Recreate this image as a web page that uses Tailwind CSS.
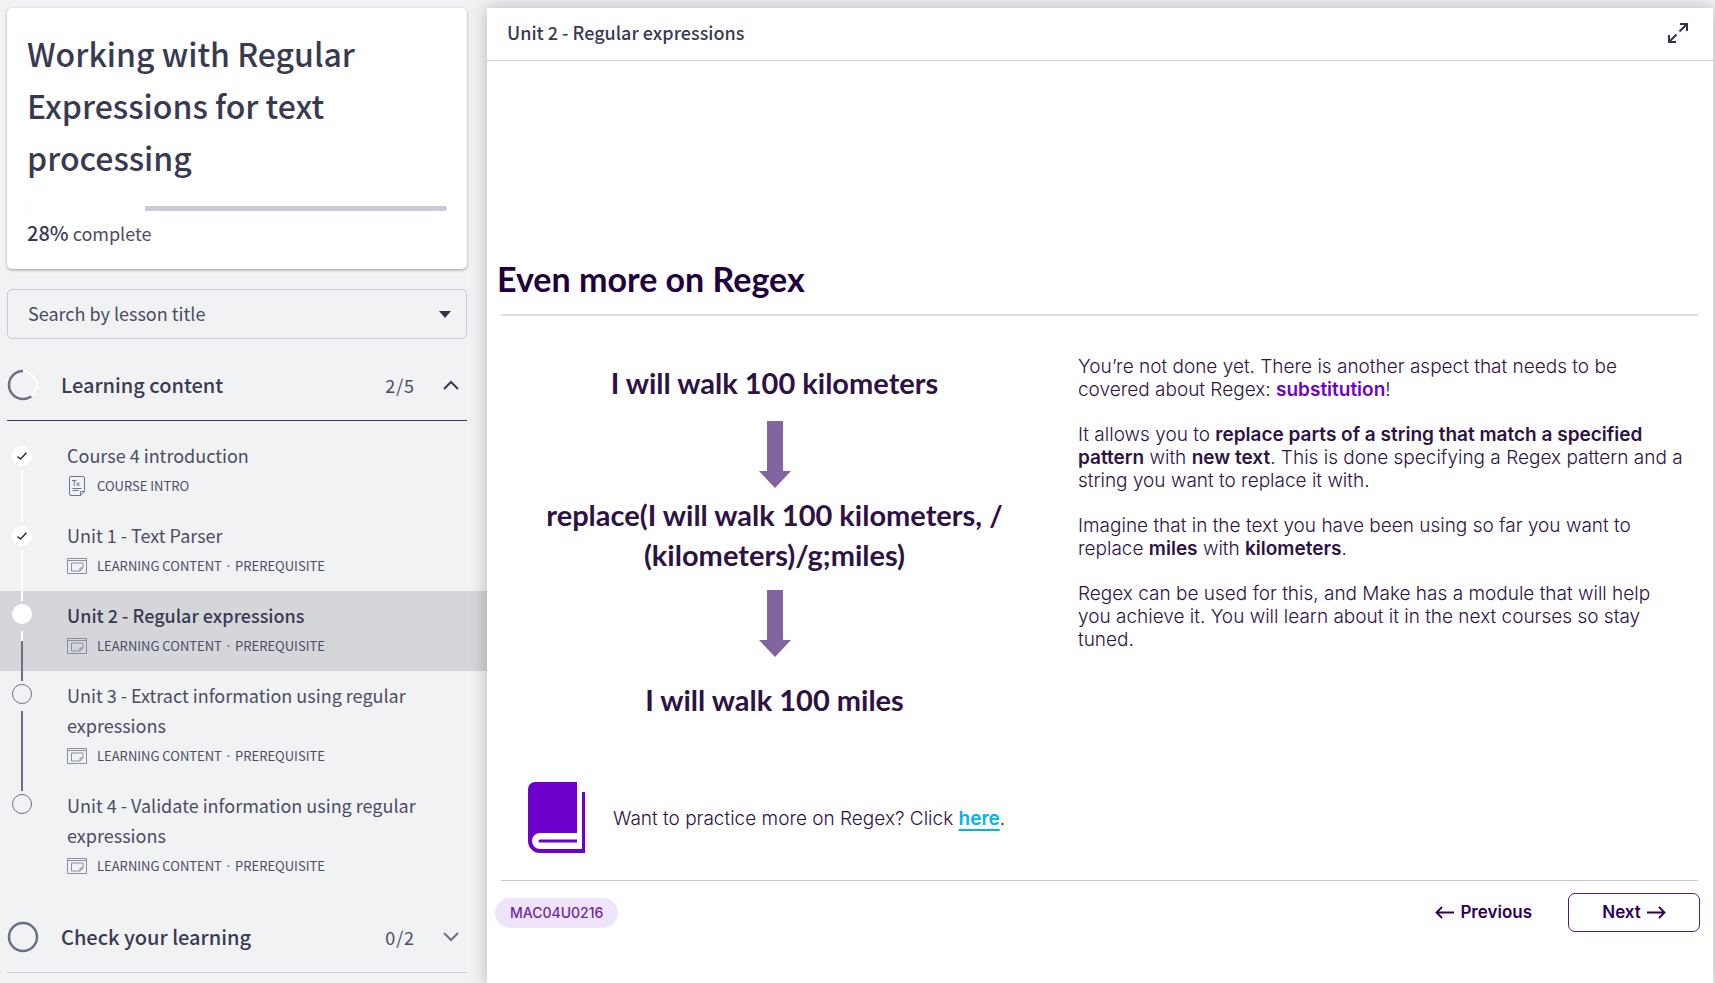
<!DOCTYPE html>
<html lang="en">
<head>
<meta charset="utf-8">
<title>Working with Regular Expressions for text processing</title>
<script src="https://cdn.jsdelivr.net/npm/@tailwindcss/browser@4"></script>
</head>
<body class="bg-[#f1f2f4] text-[#383a52] font-['Noto_Sans_CJK_JP','Noto_Sans_CJK_SC',sans-serif]">
<svg class="hidden">
  <symbol id="lesson" viewBox="0 0 20 16"><g fill="none" stroke="currentColor"><path d="M.5.5h19v15H.5zM.5 2.500h19M16 10V5H4.500v8H13zM13 13v-3h3"/></g></symbol>
  <symbol id="down-arrow" viewBox="0 0 32 67"><path fill="#82649f" d="M8 0h16v50h8L16 67 0 50h8z"/></symbol>
  <symbol id="check" viewBox="0 0 10 8"><path fill="none" stroke="#2b2b35" stroke-width="1.500" d="M.5 4.500 3.500 7 9.500.8"/></symbol>
</svg>
<div class="flex min-h-screen">
  <aside class="w-[487px] shrink-0 pt-2">
    <section class="ml-[7px] mr-5 h-[261px] rounded-[5px] bg-white px-5 pt-[19px] shadow-[0_1px_3px_rgba(0,0,0,0.35)]">
      <h1 class="text-[32px] leading-[52px] font-medium">Working with Regular Expressions for text processing</h1>
      <div class="mt-[23px] flex h-[5px] overflow-hidden rounded-[3px] bg-[#c9cbd8]" role="progressbar" aria-valuenow="28" aria-valuemin="0" aria-valuemax="100" aria-label="Course progress"><div class="bg-white" style="width:28%"></div></div>
      <p class="mt-[7px] text-[18px] leading-[30px]"><span class="text-[20px] font-medium">28%</span> <span class="text-[#4b4d63]">complete</span></p>
    </section>
    <div class="relative mt-5 mr-5 ml-[7px]">
      <select aria-label="Search by lesson title" class="h-[50px] w-full appearance-none rounded-[5px] border border-[#c9cbd8] bg-transparent px-5 pb-[2px] text-[18px] text-[#4b4d63]"><option>Search by lesson title</option></select>
      <svg class="pointer-events-none absolute top-[22px] right-4 h-[7px] w-3" viewBox="0 0 12 7"><path fill="#33344d" d="M0 0h12L6 7z"/></svg>
    </div>
    <button class="mt-[11px] ml-[7px] flex h-[71px] w-[460px] items-center border-b border-[#383a5c] text-left">
      <svg class="size-[32px]" viewBox="0 0 32 32" fill="none" stroke-width="2.500"><circle cx="16" cy="16" r="14" stroke="#6d7085"/><path stroke="#fff" stroke-width="3" d="M16 2A14 14 0 0 1 24.200 27.300"/></svg>
      <span class="ml-[22px] flex-1 text-[20px] font-medium">Learning content</span>
      <span class="text-[18px] tracking-wider text-[#4b4d63]">2/5</span>
      <svg class="mr-2 ml-7 h-[10px] w-4" viewBox="0 0 16 10"><path fill="none" stroke="#383a52" stroke-width="2" d="M1 9l7-7 7 7"/></svg>
    </button>
    <ol class="pt-[10px] text-[#4b4d63]">
      <li class="flex h-20">
        <div class="ml-3 flex w-5 flex-col items-center"><i class="h-[10px]"></i><i class="flex h-[30px] items-center"><b class="flex size-5 items-center justify-center rounded-full bg-white"><svg class="h-2 w-[10px]"><use href="#check"/></svg></b></i><i class="w-[2px] flex-1 bg-white"></i></div>
        <a href="#" class="ml-[35px] py-[9px]"><span class="block text-[18px] leading-[30px]">Course 4 introduction</span>
          <span class="flex h-8 items-center text-[13px]"><svg class="mr-[12px] ml-[2px] h-5 w-4" viewBox="0 0 16 20" fill="none" stroke="#6d7590"><path d="M2 .5h12a1.500 1.500 0 0 1 1.500 1.500v13.500l-4 4H2A1.500 1.500 0 0 1 .5 18V2A1.500 1.500 0 0 1 2 .5zM11.500 19.500v-4h4M3.500 12.500h9M3.500 14.500h6"/><path d="M3 4.500h4.500M5.200 4.500V10M7.500 6.500l3 3.500M10.500 6.500l-3 3.500"/></svg>COURSE INTRO</span></a>
      </li>
      <li class="flex h-20">
        <div class="ml-3 flex w-5 flex-col items-center"><i class="h-[10px] w-[2px] bg-white"></i><i class="flex h-[30px] items-center"><b class="flex size-5 items-center justify-center rounded-full bg-white"><svg class="h-2 w-[10px]"><use href="#check"/></svg></b></i><i class="w-[2px] flex-1 bg-white"></i></div>
        <a href="#" class="ml-[35px] py-[9px]"><span class="block text-[18px] leading-[30px]">Unit 1 - Text Parser</span>
          <span class="flex h-8 items-center text-[13px] whitespace-pre"><svg class="mr-[10px] h-4 w-5 text-[#8b8da0]"><use href="#lesson"/></svg>LEARNING CONTENT · PREREQUISITE</span></a>
      </li>
      <li class="flex h-20 bg-[#d5d6da]">
        <div class="ml-3 flex w-5 flex-col items-center"><i class="h-[10px] w-[2px] bg-white"></i><i class="flex h-[30px] items-center pb-1"><b class="size-5 rounded-full bg-white"></b></i><i class="h-[10px] w-[2px] bg-white"></i><i class="w-[2px] flex-1 bg-[#6d7085]"></i></div>
        <a href="#" aria-current="page" class="ml-[35px] py-[9px]"><span class="block text-[18px] leading-[30px] font-medium text-[#383a52]">Unit 2 - Regular expressions</span>
          <span class="flex h-8 items-center text-[13px] whitespace-pre"><svg class="mr-[10px] h-4 w-5 text-[#8b8da0]"><use href="#lesson"/></svg>LEARNING CONTENT · PREREQUISITE</span></a>
      </li>
      <li class="flex h-[110px]">
        <div class="ml-3 flex w-5 flex-col items-center"><i class="h-[10px] w-[2px] bg-[#6d7085]"></i><i class="flex h-[30px] items-center pb-1"><b class="size-5 rounded-full border border-[#6d7085]"></b></i><i class="w-[2px] flex-1 bg-[#6d7085]"></i></div>
        <a href="#" class="mr-12 ml-[35px] flex-1 py-[9px]"><span class="block text-[18px] leading-[30px]">Unit 3 - Extract information using regular expressions</span>
          <span class="flex h-8 items-center text-[13px] whitespace-pre"><svg class="mr-[10px] h-4 w-5 text-[#8b8da0]"><use href="#lesson"/></svg>LEARNING CONTENT · PREREQUISITE</span></a>
      </li>
      <li class="flex h-[110px]">
        <div class="ml-3 flex w-5 flex-col items-center"><i class="h-[10px] w-[2px] bg-[#6d7085]"></i><i class="flex h-[30px] items-center pb-1"><b class="size-5 rounded-full border border-[#6d7085]"></b></i></div>
        <a href="#" class="mr-12 ml-[35px] flex-1 py-[9px]"><span class="block text-[18px] leading-[30px]">Unit 4 - Validate information using regular expressions</span>
          <span class="flex h-8 items-center text-[13px] whitespace-pre"><svg class="mr-[10px] h-4 w-5 text-[#8b8da0]"><use href="#lesson"/></svg>LEARNING CONTENT · PREREQUISITE</span></a>
      </li>
    </ol>
    <button class="mt-[11px] ml-[7px] flex h-[71px] w-[460px] items-center border-b border-[#c9cbd8] text-left">
      <svg class="size-[32px]" viewBox="0 0 32 32" fill="none" stroke-width="2.500"><circle cx="16" cy="16" r="14" stroke="#6d7085"/></svg>
      <span class="ml-[22px] flex-1 text-[20px] font-medium">Check your learning</span>
      <span class="text-[18px] tracking-wider text-[#4b4d63]">0/2</span>
      <svg class="mr-2 ml-7 h-[10px] w-4" viewBox="0 0 16 10"><path fill="none" stroke="#6d7085" stroke-width="2" d="M1 1l7 7 7-7"/></svg>
    </button>
  </aside>
  <main class="relative z-10 mt-2 mr-[2px] min-w-0 flex-1 bg-white shadow-[0_0_16px_rgba(0,0,0,0.25)]">
    <header class="flex h-[53px] items-center justify-between border-b border-[#c9cbd8] pr-[25px] pb-[3px] pl-5">
      <h2 class="text-[18px] font-medium">Unit 2 - Regular expressions</h2>
      <button aria-label="Full screen"><svg class="size-5" viewBox="0 0 20 20" fill="none" stroke="#33344d" stroke-width="2"><path d="M12 1h7v7M19 1l-7.500 7.500M8 19H1v-7M1 19l7.500-7.500"/></svg></button>
    </header>
    <article class="px-[14px] pr-[15px] pt-[196px] text-[#2d1245]">
      <h2 class="-ml-1 text-[34px] leading-[44px] font-bold text-[#20003d] font-['Lato',sans-serif]">Even more on Regex</h2>
      <hr class="mt-[13px] border-t-2 border-[#e2dde1]">
      <div class="grid grid-cols-[547fr_620fr] gap-[30px]">
        <div class="flex flex-col items-center pt-[47px] text-center text-[29px] leading-10 font-bold font-['Lato',sans-serif]">
          <p>I will walk 100 kilometers</p>
          <svg class="mt-[18px] h-[67px] w-8"><use href="#down-arrow"/></svg>
          <p class="mt-[7px]">replace(I will walk 100 kilometers, /<br>(kilometers)/g;miles)</p>
          <svg class="mt-[15px] h-[67px] w-8"><use href="#down-arrow"/></svg>
          <p class="mt-[23px]">I will walk 100 miles</p>
        </div>
        <div class="flex flex-col gap-[22px] pt-[39px] text-[19px] leading-[23px] font-light font-['Inter',sans-serif]">
          <p>You’re not done yet. There is another aspect that needs to be<br>covered about Regex: <b class="font-semibold text-[#6d00cc]">substitution</b>!</p>
          <p>It allows you to <b class="font-semibold">replace parts of a string that match a specified<br>pattern</b> with <b class="font-semibold">new text</b>. This is done specifying a Regex pattern and a<br>string you want to replace it with.</p>
          <p>Imagine that in the text you have been using so far you want to<br>replace <b class="font-semibold">miles</b> with <b class="font-semibold">kilometers</b>.</p>
          <p>Regex can be used for this, and Make has a module that will help<br>you achieve it. You will learn about it in the next courses so stay<br>tuned.</p>
        </div>
      </div>
      <div class="mt-[62px] flex items-center pl-[27px]">
        <svg class="h-[71px] w-[57px]" viewBox="0 0 57 71" fill="#6d00cc"><path d="M7 0h42v51H12a8 8 0 0 0 0 16h42V10h3v61H12A12 12 0 0 1 0 59V7a7 7 0 0 1 7-7z"/><path d="M12 57.500h37v3H12a1.500 1.500 0 0 1 0-3z"/></svg>
        <p class="ml-7 pt-[2px] text-[19px] leading-7 font-light font-['Inter',sans-serif]">Want to practice more on Regex? Click <a href="#" class="font-semibold text-[#00b4f0] underline decoration-2 underline-offset-4">here</a>.</p>
      </div>
      <hr class="mt-[27px] border-[#cfc6cb]">
      <footer class="mt-3 -mr-[2px] -ml-[6px] flex items-center font-['Inter',sans-serif]">
        <span class="flex h-[30px] items-center rounded-full bg-[#f0e4fb] px-[15px] text-[14px] font-medium text-[#6b2aa0]">MAC04U0216</span>
        <button class="ml-auto flex items-center gap-[6px] text-[17px] font-semibold text-[#2d0057]"><svg class="h-[13px] w-[19px]" viewBox="0 0 19 13" fill="none" stroke="currentColor" stroke-width="1.800"><path d="M19 6.500H1.500M7 1 1.500 6.500 7 12"/></svg>Previous</button>
        <button class="ml-[36px] flex h-[39px] w-[132px] items-center justify-center gap-[6px] rounded-[7px] border border-[#4b1f75] text-[17px] font-semibold text-[#2d0057]">Next<svg class="h-[13px] w-[19px]" viewBox="0 0 19 13" fill="none" stroke="currentColor" stroke-width="1.800"><path d="M0 6.500h17.500M12 1l5.500 5.500L12 12"/></svg></button>
      </footer>
    </article>
  </main>
</div>
</body>
</html>
